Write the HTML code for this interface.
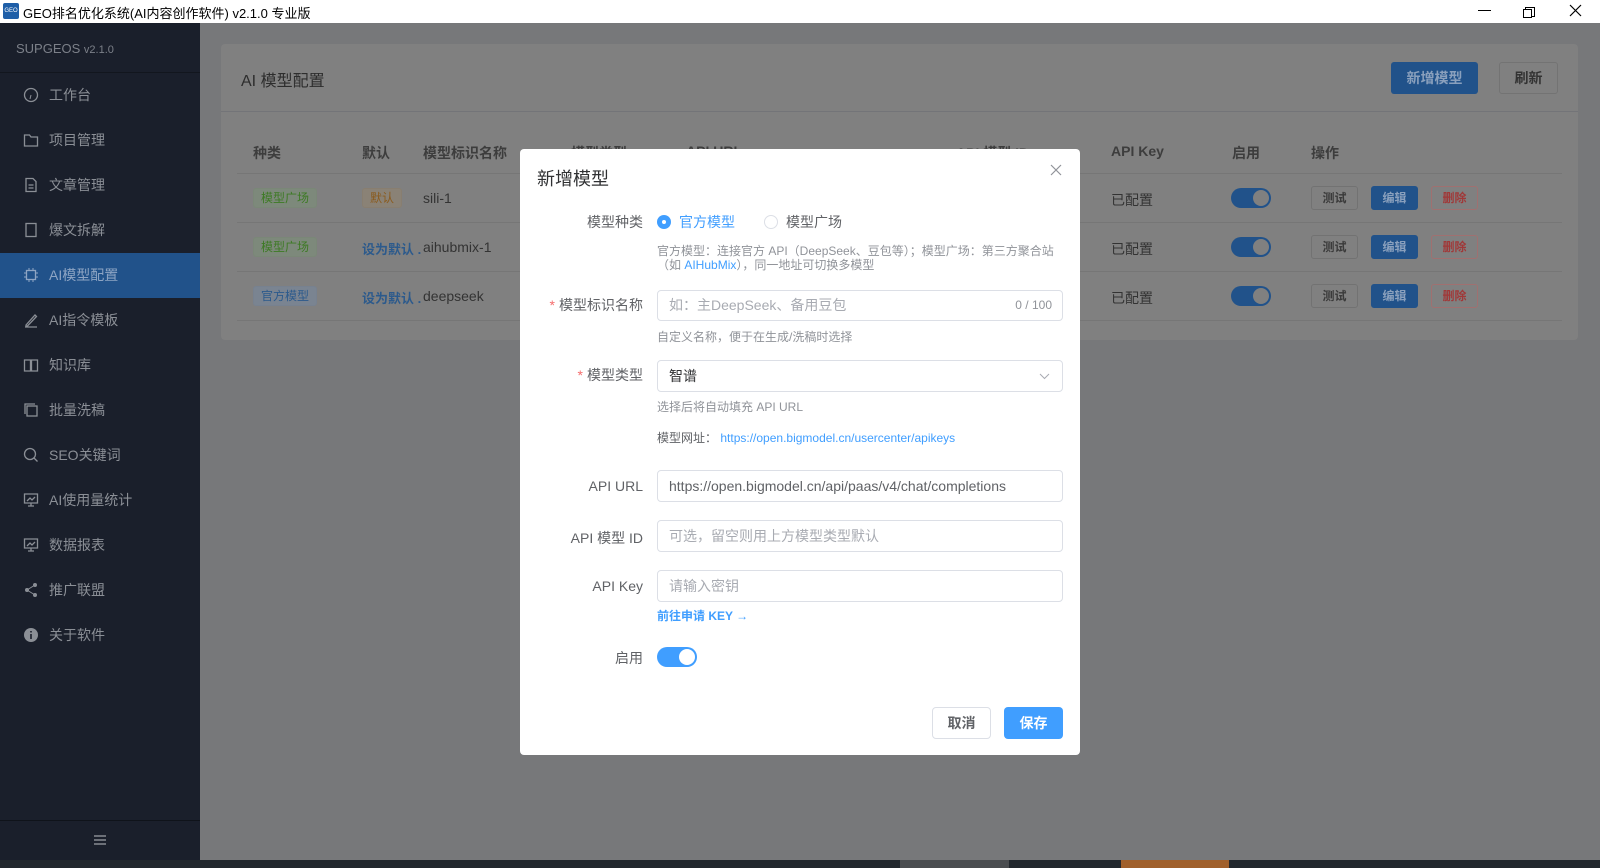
<!DOCTYPE html>
<html><head><meta charset="utf-8"><style>
*{box-sizing:border-box;margin:0;padding:0}
body{width:1600px;height:868px;overflow:hidden;position:relative;font-family:"Liberation Sans","Noto Sans CJK SC",sans-serif;background:#77787a}
.abs{position:absolute}
.titlebar{left:0;top:0;width:1600px;height:23px;background:#fff;font-size:13px;color:#000}
.side{left:0;top:23px;width:200px;height:837px;background:#1a1f2b}
.mi{position:absolute;left:0;width:200px;height:45px;line-height:45px;color:#8b8f96;font-size:14px;padding-left:49px}
.mi svg{position:absolute;left:23px;top:14px}
.card{left:221px;top:44px;width:1357px;height:296px;background:#808080;border-radius:4px}
.th{position:absolute;font-size:14px;font-weight:bold;color:#3d3d3d}
.td{position:absolute;font-size:14px;color:#333}
.tag{position:absolute;height:20px;line-height:18px;font-size:12px;padding:0 7px;border-radius:3px;border:1px solid}
.tg{color:#3d7a24;background:#7d897b;border-color:#7a8777}
.tb{color:#2c5a8c;background:#7a8491;border-color:#77818f}
.tw{color:#8a5b1e;background:#8a8276;border-color:#887e70}
.line{position:absolute;left:16px;width:1325px;height:1px;background:#767676}
.sw{position:absolute;width:40px;height:20px;border-radius:10px;background:#21528a}
.sw::after{content:"";position:absolute;right:2px;top:2px;width:16px;height:16px;border-radius:50%;background:#808080}
.btn{position:absolute;height:24px;line-height:22px;width:47px;text-align:center;font-size:12px;font-weight:bold;border:1px solid;border-radius:3px}
.dlg{left:520px;top:149px;width:560px;height:606px;background:#fff;border-radius:4px}
.lbl{position:absolute;right:437px;font-size:14px;color:#606266;text-align:right;white-space:nowrap}
.star{color:#f56c6c;margin-right:4px}
.inp{position:absolute;left:137px;width:406px;border:1px solid #dcdfe6;border-radius:4px;font-size:14px;color:#606266;padding-left:11px}
.ph{color:#a8abb2}
.hint{position:absolute;left:137px;font-size:12px;color:#909399}
</style></head><body>
<div class="abs titlebar">
<div class="abs" style="left:3px;top:3px;width:16px;height:16px;background:#1f5fa8;border-radius:2px;color:#fff;font-size:6px;line-height:16px;text-align:center">GEO</div>
<div class="abs" style="left:23px;top:3px">GEO排名优化系统(AI内容创作软件) v2.1.0 专业版</div>
<div class="abs" style="left:1478px;top:10px;width:13px;height:1px;background:#000"></div>
<div class="abs" style="left:1525px;top:7px;width:10px;height:10px;border:1px solid #000;background:#fff"></div>
<div class="abs" style="left:1523px;top:9px;width:9px;height:9px;border:1px solid #000;background:#fff"></div>
<svg class="abs" style="left:1569px;top:4px" width="13" height="13"><path d="M1 1L12 12M12 1L1 12" stroke="#000" stroke-width="1.2"/></svg>
</div>
<div class="abs side">
<div class="abs" style="left:16px;top:18px;font-size:13px;color:#7c8089">SUPGEOS <span style="font-size:11px">v2.1.0</span></div>
<div class="abs" style="left:0;top:49px;width:200px;height:1px;background:#12161e"></div>
<div class="mi" style="top:50px"><svg width="16" height="16"><circle cx="8" cy="8" r="6.5" fill="none" stroke="#8b8f96" stroke-width="1.3"/><path d="M8 8L7 12" stroke="#8b8f96"/></svg>工作台</div>
<div class="mi" style="top:95px"><svg width="16" height="16"><path d="M1.5 3h5l1.5 2h6.5v9h-13z" fill="none" stroke="#8b8f96" stroke-width="1.3"/></svg>项目管理</div>
<div class="mi" style="top:140px"><svg width="16" height="16"><path d="M3 1.5h7l3 3v10H3zM5.5 8h5M5.5 11h5" fill="none" stroke="#8b8f96" stroke-width="1.3"/></svg>文章管理</div>
<div class="mi" style="top:185px"><svg width="16" height="16"><rect x="3" y="1.5" width="10" height="13" fill="none" stroke="#8b8f96" stroke-width="1.3"/></svg>爆文拆解</div>
<div class="mi" style="top:230px;background:#21528a;color:#8ea5c4"><svg width="16" height="16"><rect x="3.5" y="3.5" width="9" height="9" fill="none" stroke="#8ea5c4" stroke-width="1.3"/><path d="M6 1v2M10 1v2M6 13v2M10 13v2M1 6h2M1 10h2M13 6h2M13 10h2" stroke="#8ea5c4"/></svg>AI模型配置</div>
<div class="mi" style="top:275px"><svg width="16" height="16"><path d="M3 13L12 3l1.5 1.5L4.5 14H3zM2 15h12" fill="none" stroke="#8b8f96" stroke-width="1.3"/></svg>AI指令模板</div>
<div class="mi" style="top:320px"><svg width="16" height="16"><path d="M1.5 3h6v11h-6zM8.5 3h6v11h-6z" fill="none" stroke="#8b8f96" stroke-width="1.3"/></svg>知识库</div>
<div class="mi" style="top:365px"><svg width="16" height="16"><rect x="4" y="4" width="10" height="10" fill="none" stroke="#8b8f96" stroke-width="1.3"/><path d="M2 12V2h10" fill="none" stroke="#8b8f96" stroke-width="1.3"/></svg>批量洗稿</div>
<div class="mi" style="top:410px"><svg width="16" height="16"><circle cx="7" cy="7" r="5.5" fill="none" stroke="#8b8f96" stroke-width="1.3"/><path d="M11 11l3.5 3.5" stroke="#8b8f96" stroke-width="1.3"/></svg>SEO关键词</div>
<div class="mi" style="top:455px"><svg width="16" height="16"><path d="M1.5 2h13v9h-13zM8 11v3M5 14h6M4 9l3-3 2 2 3-3" fill="none" stroke="#8b8f96" stroke-width="1.3"/></svg>AI使用量统计</div>
<div class="mi" style="top:500px"><svg width="16" height="16"><path d="M1.5 2h13v9h-13zM8 11v3M5 14h6M4 9l3-3 2 2 3-3" fill="none" stroke="#8b8f96" stroke-width="1.3"/></svg>数据报表</div>
<div class="mi" style="top:545px"><svg width="16" height="16"><circle cx="12" cy="3" r="2" fill="#8b8f96"/><circle cx="4" cy="8" r="2" fill="#8b8f96"/><circle cx="12" cy="13" r="2" fill="#8b8f96"/><path d="M12 3L4 8l8 5" stroke="#8b8f96" fill="none"/></svg>推广联盟</div>
<div class="mi" style="top:590px"><svg width="16" height="16"><circle cx="8" cy="8" r="7" fill="#8b8f96"/><path d="M8 7v5M8 4v1.5" stroke="#1a1f2b" stroke-width="1.6"/></svg>关于软件</div>
<div class="abs" style="left:0;top:797px;width:200px;height:1px;background:#0f131a"></div>
<div class="abs" style="left:94px;top:812px;width:12px;height:2px;background:#6c7078;box-shadow:0 4px 0 #6c7078,0 8px 0 #6c7078"></div>
</div>
<div class="abs" style="left:0;top:860px;width:1600px;height:8px;background:#22272d"></div>
<div class="abs" style="left:900px;top:860px;width:109px;height:8px;background:#4a4d50"></div>
<div class="abs" style="left:1121px;top:860px;width:108px;height:8px;background:#a0602c"></div>

<div class="abs card">
<div class="abs" style="left:20px;top:23px;font-size:16px;color:#2d2d2d">AI 模型配置</div>
<div class="abs" style="left:1170px;top:18px;width:87px;height:32px;background:#21528a;border-radius:3px;color:#8aa0bd;font-size:14px;font-weight:bold;text-align:center;line-height:32px">新增模型</div>
<div class="abs" style="left:1278px;top:18px;width:59px;height:32px;border:1px solid #737373;border-radius:3px;color:#333;font-size:14px;font-weight:bold;text-align:center;line-height:30px">刷新</div>
<div class="abs" style="left:0;top:67px;width:1357px;height:1px;background:#737478"></div>
<div class="th" style="left:32px;top:99px">种类</div>
<div class="th" style="left:141px;top:99px">默认</div>
<div class="th" style="left:202px;top:99px">模型标识名称</div>
<div class="th" style="left:350px;top:99px">模型类型</div>
<div class="th" style="left:465px;top:99px">API URL</div>
<div class="th" style="left:735px;top:99px">API 模型 ID</div>
<div class="th" style="left:890px;top:99px">API Key</div>
<div class="th" style="left:1011px;top:99px">启用</div>
<div class="th" style="left:1090px;top:99px">操作</div>
<div class="line" style="top:129px"></div>
<div class="line" style="top:178px"></div>
<div class="line" style="top:227px"></div>
<div class="line" style="top:276px"></div>
<div class="tag tg" style="left:32px;top:144px">模型广场</div>
<div class="tag tw" style="left:141px;top:144px">默认</div>
<div class="td" style="left:202px;top:146px">sili-1</div>
<div class="tag tg" style="left:32px;top:193px">模型广场</div>
<div class="td" style="left:141px;top:195px;color:#2c5a8c;font-weight:bold;font-size:13px">设为默认 .</div>
<div class="td" style="left:202px;top:195px">aihubmix-1</div>
<div class="tag tb" style="left:32px;top:242px">官方模型</div>
<div class="td" style="left:141px;top:244px;color:#2c5a8c;font-weight:bold;font-size:13px">设为默认 .</div>
<div class="td" style="left:202px;top:244px">deepseek</div>
<div class="td" style="left:890px;top:146px">已配置</div>
<div class="td" style="left:890px;top:195px">已配置</div>
<div class="td" style="left:890px;top:244px">已配置</div>
<div class="sw" style="left:1010px;top:144px"></div>
<div class="sw" style="left:1010px;top:193px"></div>
<div class="sw" style="left:1010px;top:242px"></div>
<div class="btn" style="left:1090px;top:142px;color:#3a3a3a;border-color:#727272">测试</div>
<div class="btn" style="left:1150px;top:142px;color:#8aa0bd;background:#21528a;border-color:#21528a">编辑</div>
<div class="btn" style="left:1210px;top:142px;color:#a03838;border-color:#a07070">删除</div>
<div class="btn" style="left:1090px;top:191px;color:#3a3a3a;border-color:#727272">测试</div>
<div class="btn" style="left:1150px;top:191px;color:#8aa0bd;background:#21528a;border-color:#21528a">编辑</div>
<div class="btn" style="left:1210px;top:191px;color:#a03838;border-color:#a07070">删除</div>
<div class="btn" style="left:1090px;top:240px;color:#3a3a3a;border-color:#727272">测试</div>
<div class="btn" style="left:1150px;top:240px;color:#8aa0bd;background:#21528a;border-color:#21528a">编辑</div>
<div class="btn" style="left:1210px;top:240px;color:#a03838;border-color:#a07070">删除</div>
</div>

<div class="abs dlg">
<div class="abs" style="left:17px;top:16px;font-size:18px;color:#303133">新增模型</div>
<svg class="abs" style="left:530px;top:15px" width="12" height="12"><path d="M1 1L11 11M11 1L1 11" stroke="#909399" stroke-width="1.2"/></svg>
<div class="lbl" style="top:63px">模型种类</div>
<div class="abs" style="left:137px;top:66px;width:14px;height:14px;border-radius:50%;background:#409eff"><div class="abs" style="left:5px;top:5px;width:4px;height:4px;border-radius:50%;background:#fff"></div></div>
<div class="abs" style="left:159px;top:63px;font-size:14px;color:#409eff">官方模型</div>
<div class="abs" style="left:244px;top:66px;width:14px;height:14px;border-radius:50%;border:1px solid #dcdfe6"></div>
<div class="abs" style="left:266px;top:63px;font-size:14px;color:#606266">模型广场</div>
<div class="hint" style="top:95px;line-height:14px">官方模型：连接官方 API（DeepSeek、豆包等）；模型广场：第三方聚合站<br>（如 <span style="color:#409eff">AIHubMix</span>），同一地址可切换多模型</div>
<div class="lbl" style="top:146px"><span class="star">*</span>模型标识名称</div>
<div class="inp" style="top:141px;height:31px;line-height:29px"><span class="ph">如：主DeepSeek、备用豆包</span><span class="abs" style="right:10px;font-size:12px;color:#909399">0 / 100</span></div>
<div class="hint" style="top:179px">自定义名称，便于在生成/洗稿时选择</div>
<div class="lbl" style="top:216px"><span class="star">*</span>模型类型</div>
<div class="inp" style="top:211px;height:32px;line-height:30px;color:#303133">智谱<svg class="abs" style="right:12px;top:12px" width="11" height="7"><path d="M1 1l4.5 4.5L10 1" stroke="#a8abb2" fill="none"/></svg></div>
<div class="hint" style="top:249px">选择后将自动填充 API URL</div>
<div class="hint" style="top:280px"><span style="color:#606266">模型网址：</span> <span style="color:#409eff">https://open.bigmodel.cn/usercenter/apikeys</span></div>
<div class="lbl" style="top:329px">API URL</div>
<div class="inp" style="top:321px;height:32px;line-height:30px">https://open.bigmodel.cn/api/paas/v4/chat/completions</div>
<div class="lbl" style="top:379px">API 模型 ID</div>
<div class="inp" style="top:371px;height:32px;line-height:30px"><span class="ph">可选，留空则用上方模型类型默认</span></div>
<div class="lbl" style="top:429px">API Key</div>
<div class="inp" style="top:421px;height:32px;line-height:30px"><span class="ph">请输入密钥</span></div>
<div class="hint" style="top:458px;color:#409eff;font-weight:bold">前往申请 KEY →</div>
<div class="lbl" style="top:499px">启用</div>
<div class="abs" style="left:137px;top:498px;width:40px;height:20px;border-radius:10px;background:#409eff"><div class="abs" style="right:2px;top:2px;width:16px;height:16px;border-radius:50%;background:#fff"></div></div>
<div class="abs" style="left:412px;top:558px;width:59px;height:32px;border:1px solid #dcdfe6;border-radius:4px;font-size:14px;color:#606266;text-align:center;line-height:30px;font-weight:bold">取消</div>
<div class="abs" style="left:484px;top:558px;width:59px;height:32px;background:#409eff;border-radius:4px;font-size:14px;color:#fff;text-align:center;line-height:32px;font-weight:bold">保存</div>
</div>
</body></html>
